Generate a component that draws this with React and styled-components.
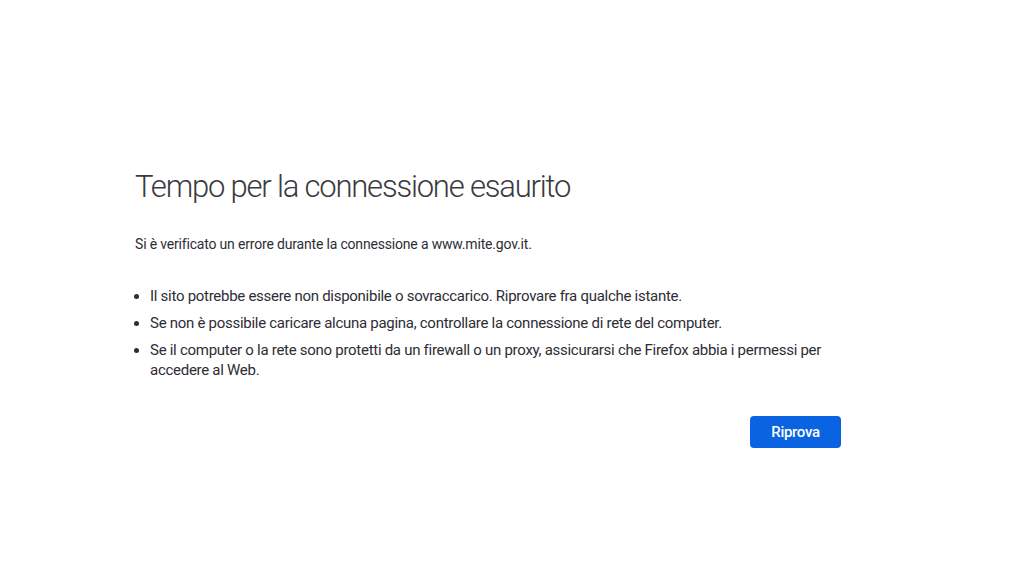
import React from "react";
import styled, { createGlobalStyle } from "styled-components";

const Global = createGlobalStyle`
  html, body { margin: 0; padding: 0; background: #ffffff; }
  body { font-family: Roboto, "Open Sans", sans-serif; color: #2b2a33; }
`;

const Page = styled.main`
  width: 1024px;
  height: 576px;
  box-sizing: border-box;
  padding: 166px 0 0 135px;
  overflow: hidden;
`;

const Container = styled.div`
  width: 706px;
  display: flex;
  flex-direction: column;
`;

const Title = styled.h1`
  margin: 0;
  font-family: Roboto, sans-serif;
  font-weight: 300;
  font-size: 31px;
  line-height: 42px;
  letter-spacing: -1.2px;
  color: #3a3a40;
`;

const Text = styled.p`
  margin: 26px 0 0;
  font-size: 14px;
  line-height: 20px;
  letter-spacing: -0.18px;
  color: #2e2d35;
`;

const List = styled.ul`
  margin: 32px 0 0;
  padding: 0 0 0 15px;
  display: flex;
  flex-direction: column;
  gap: 7px;
`;

const Item = styled.li`
  font-size: 15px;
  line-height: 20px;
  letter-spacing: -0.28px;
  color: #2e2d35;
`;

const Actions = styled.div`
  display: flex;
  justify-content: flex-end;
  margin-top: 36px;
`;

const Button = styled.button`
  width: 91px;
  height: 32px;
  border: none;
  border-radius: 4px;
  background: #0a63e0;
  color: #ffffff;
  font-family: Roboto, sans-serif;
  font-size: 15px;
  font-weight: 500;
  letter-spacing: -0.3px;
  cursor: pointer;
`;

export default function App() {
  return (
    <>
      <Global />
      <Page>
        <Container>
          <Title>Tempo per la connessione esaurito</Title>
          <Text>Si è verificato un errore durante la connessione a www.mite.gov.it.</Text>
          <List>
            <Item>Il sito potrebbe essere non disponibile o sovraccarico. Riprovare fra qualche istante.</Item>
            <Item>Se non è possibile caricare alcuna pagina, controllare la connessione di rete del computer.</Item>
            <Item>Se il computer o la rete sono protetti da un firewall o un proxy, assicurarsi che Firefox abbia i permessi per accedere al Web.</Item>
          </List>
          <Actions>
            <Button>Riprova</Button>
          </Actions>
        </Container>
      </Page>
    </>
  );
}
